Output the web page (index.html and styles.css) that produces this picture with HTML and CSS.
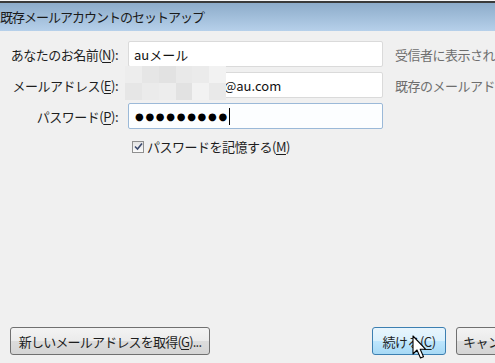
FILE: index.html
```html
<!DOCTYPE html>
<html lang="ja">
<head>
  <meta charset="UTF-8">
  <meta name="viewport" content="width=device-width, initial-scale=1.0">
  <title>既存メールアカウントのセットアップ</title>
  <link rel="stylesheet" href="styles.css">
</head>
<body>
  <div class="window">
    <div class="titlebar">既存メールアカウントのセットアップ</div>

    <div class="form">
      <label class="label" for="name">あなたのお名前(<u>N</u>):</label>
      <input class="field" id="name" type="text" value="auメール">
      <span class="hint">受信者に表示される名前です</span>

      <label class="label" for="email">メールアドレス(<u>E</u>):</label>
      <div class="field-wrap">
        <input class="field field-email" id="email" type="text" value="@au.com">
        <div class="mosaic">
          <span class="m1"></span><span class="m2"></span><span class="m3"></span><span class="m4"></span><span class="m5"></span><span class="m6"></span>
          <span class="m2"></span><span class="m5"></span><span class="m1"></span><span class="m3"></span><span class="m6"></span><span class="m4"></span>
        </div>
      </div>
      <span class="hint">既存のメールアドレスです</span>

      <label class="label" for="pass">パスワード(<u>P</u>):</label>
      <div class="field field-focus"><span class="dots">●●●●●●●●●</span><span class="caret"></span></div>
      <span></span>

      <span></span>
      <label class="remember"><span class="check"><svg width="9" height="9" viewBox="0 0 9 9"><path d="M1 4.5 L3.5 7 L8 1.5" fill="none" stroke="#3c4a6e" stroke-width="1.6"/></svg></span>パスワードを記憶する(<u>M</u>)</label>
    </div>

    <div class="footer">
      <button class="btn btn-new">新しいメールアドレスを取得(<u>G</u>)...</button>
      <div class="actions">
        <button class="btn btn-default">続ける(<u>C</u>)</button>
        <button class="btn btn-cancel">キャンセル(<u>A</u>)</button>
      </div>
    </div>

    <svg class="pointer" width="18" height="26" viewBox="0 0 18 26">
      <path d="M1 1 L1 19 L5 15 L8.5 23 L11.5 21.8 L8.2 14.2 L13.5 14.2 Z" fill="#fff" stroke="#000" stroke-width="1.1" stroke-linejoin="round"/>
    </svg>
  </div>
</body>
</html>
```

FILE: styles.css
```css
* {
  box-sizing: border-box;
}

html, body {
  margin: 0;
  height: 100%;
  overflow: hidden;
}

body {
  font-family: "Noto Sans CJK JP", "Noto Sans", sans-serif;
  font-size: 13px;
  color: #1e1e1e;
  background-color: #f0f0f0;
}

u {
  text-decoration-thickness: 1px;
  text-underline-offset: 2px;
}

.window {
  position: relative;
  display: flex;
  flex-direction: column;
  height: 100%;
  border-top: 1px solid #f4f4f4;
}

.titlebar {
  height: 30px;
  border-top: 2px solid #3a3a3a;
  padding: 4px 0 0 0;
  font-size: 13px;
  letter-spacing: -1px;
  color: #1a1a1a;
  background: linear-gradient(#8dacca, #b6d0ea);
}

.form {
  display: grid;
  grid-template-columns: 118px 255px auto;
  column-gap: 10px;
  row-gap: 5px;
  align-items: center;
  padding-top: 10px;
  white-space: nowrap;
}

.label {
  text-align: right;
  letter-spacing: -0.5px;
}

.field {
  width: 255px;
  height: 26px;
  margin: 0;
  padding: 0 5px;
  font: inherit;
  color: #111;
  background: #fff;
  border: 1px solid #dadada;
  border-radius: 2px;
  outline: none;
}

.field-wrap {
  position: relative;
  height: 26px;
}

.field-email {
  padding-left: 95px;
}

.mosaic {
  position: absolute;
  left: -3px;
  top: -6px;
  width: 101px;
  height: 34px;
  display: grid;
  grid-template-columns: repeat(6, 1fr);
  grid-template-rows: repeat(2, 1fr);
}

.m1 { background: #ededed; }
.m2 { background: #e6e6e6; }
.m3 { background: #e2e2e2; }
.m4 { background: #e9e9e9; }
.m5 { background: #ebebeb; }
.m6 { background: #f2f2f2; }

.field-focus {
  display: flex;
  align-items: center;
  padding-left: 6px;
  border-color: #9bb9d8;
  background: #fcfeff;
}

.dots {
  font-family: "DejaVu Sans", sans-serif;
  font-size: 10px;
  letter-spacing: 1.7px;
  color: #000;
}

.caret {
  width: 1px;
  height: 17px;
  margin-left: 0;
  background: #000;
}

.hint {
  padding-left: 2px;
  color: #6e6e6e;
  letter-spacing: -0.5px;
}

.remember {
  display: flex;
  align-items: center;
  margin-top: 3px;
  padding-left: 4px;
  letter-spacing: -0.5px;
}

.check {
  display: flex;
  align-items: center;
  justify-content: center;
  width: 12px;
  height: 12px;
  margin-right: 3px;
  border: 1px solid #8f8f8f;
  background: linear-gradient(#e4e4e4, #fafafa);
}

.footer {
  display: flex;
  justify-content: space-between;
  margin-top: auto;
  padding: 0 0 8px 10px;
}

.actions {
  display: flex;
  gap: 10px;
  margin-right: -51px;
}

.btn {
  height: 28px;
  padding: 0 6px;
  font: inherit;
  letter-spacing: -0.5px;
  white-space: nowrap;
  color: #1e1e1e;
  background: linear-gradient(#f3f3f3 0%, #ebebeb 50%, #dcdcdc 51%, #d5d5d5 100%);
  border: 1px solid #707070;
  border-radius: 3px;
}

.btn-new {
  width: 200px;
  letter-spacing: -0.8px;
}

.btn-default {
  width: 74px;
  border-color: #3c7fb1;
  background: linear-gradient(#e8f5fd 0%, #d9f0fc 50%, #bee6fd 51%, #a7d9f5 100%);
}

.btn-cancel {
  width: 90px;
  text-align: left;
}

.pointer {
  position: absolute;
  left: 412px;
  top: 334px;
}
```
